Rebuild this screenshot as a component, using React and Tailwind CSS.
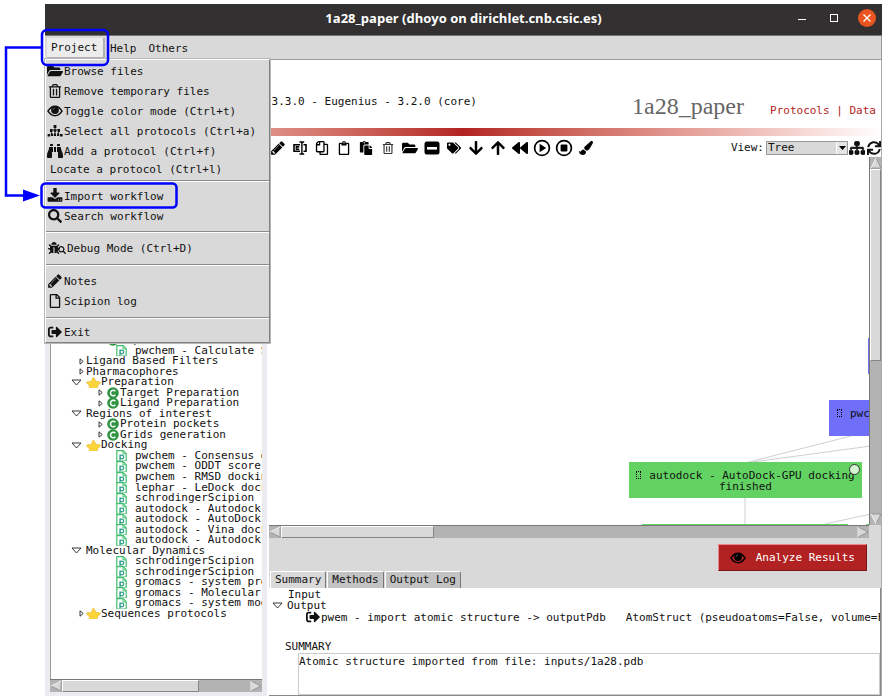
import React from "react";
import {
  FaArrowDown, FaArrowUp, FaBackward, FaBinoculars, FaBug, FaFolderOpen, FaPaste, FaPaintBrush,
  FaRegClipboard, FaRegCopy, FaRegFile, FaRegTrashAlt, FaSearch, FaSignOutAlt, FaSitemap, FaStar,
  FaSync, FaTags,
} from "react-icons/fa";

const MONO = "font-['DejaVu_Sans_Mono','Liberation_Mono',monospace]";

function Glyph({ d, className }) {
  return (
    <svg viewBox="0 0 1792 1792" className={className} fill="currentColor" aria-hidden="true">
      <path d={d} />
    </svg>
  );
}

const PENCIL = "M491 1536l91-91-235-235-91 91v107h128v128h107zm523-928q0-22-22-22-10 0-17 7l-542 542q-7 7-7 17 0 22 22 22 10 0 17-7l542-542q7-7 7-17zm-54-192l416 416-832 832h-416v-416zm683 96q0 53-37 90l-166 166-416-416 166-165q36-38 90-38 53 0 91 38l235 234q37 39 37 91z";
const DOWNLOAD = "M1344 1344q0-26-19-45t-45-19-45 19-19 45 19 45 45 19 45-19 19-45zm256 0q0-26-19-45t-45-19-45 19-19 45 19 45 45 19 45-19 19-45zm128-224v320q0 40-28 68t-68 28h-1472q-40 0-68-28t-28-68v-320q0-40 28-68t68-28h465l135 136q58 56 136 56t136-56l136-136h464q40 0 68 28t28 68zm-325-569q17 41-14 70l-448 448q-18 19-45 19t-45-19l-448-448q-31-29-14-70 17-39 59-39h256v-448q0-26 19-45t45-19h256q26 0 45 19t19 45v448h256q42 0 59 39z";

const EyeIcon = ({ className }) => (
  <svg viewBox="0 0 16 12" className={className} aria-hidden="true">
    <path d="M1 6.2C3 2.8 5.5 1.3 8 1.3s5 1.5 7 4.9c-2 3-4.5 4.5-7 4.5S3 9.2 1 6.2z" fill="none" stroke="currentColor" strokeWidth="1.5" />
    <circle cx="8" cy="5" r="3.9" fill="currentColor" />
    <path d="M6.2 4.8c0-1 .8-1.8 1.8-1.8" fill="none" stroke="#999" strokeWidth=".6" />
  </svg>
);

const RenameIcon = () => (
  <svg viewBox="0 0 14 14" className="size-3.5" fill="none" stroke="currentColor" aria-hidden="true">
    <path d="M7 3.8H1v6.4h6M10.5 3.8h2.5v6.4h-2.5" strokeWidth="1.6" />
    <path d="M6.5 1h1.8l.7.7.7-.7h1.5M6.5 13h1.8l.7-.7.7.7h1.5M8.9 1.5v11" strokeWidth="1.4" />
    <path d="M6.2 5.6H3.2v2.9h3M3.2 7h3" strokeWidth="1.1" />
  </svg>
);

const CollapseIcon = () => (
  <svg viewBox="0 0 16 14" className="h-3.5 w-4" aria-hidden="true">
    <rect x=".5" y=".5" width="15" height="13" rx="2.5" fill="currentColor" />
    <rect x="3" y="6" width="10" height="2.6" fill="#fff" />
  </svg>
);

const CircleIcon = ({ stop }) => (
  <svg viewBox="0 0 18 18" className="size-[18px]" fill="currentColor" aria-hidden="true">
    <circle cx="9" cy="9" r="7.4" fill="none" stroke="currentColor" strokeWidth="1.7" />
    {stop ? <rect x="5.6" y="5.6" width="6.8" height="6.8" rx="1" /> : <path d="M6.6 4.8v8.4L13.2 9z" />}
  </svg>
);

const BranchIcon = () => (
  <svg viewBox="0 0 16 14" className="h-3.5 w-4" fill="currentColor" aria-hidden="true">
    <path d="M6.6 1h2.8v3H6.6zM3 5h2.4v3H3zM6.8 5.4h2.4v2.4H6.8zM10.6 5H13v3h-2.4zM.6 10h2.6v2.6H.6zM4 9.6h2.2V12H4zM7 9.6h2V12H7zM10 9.6h2.2V12H10zM13 10h2.6v2.6H13z" />
    <path d="M4 6h8M8 3v8M4.4 7.5v3M11.4 7.5v3" stroke="currentColor" strokeWidth=".9" />
  </svg>
);

const BugSearchIcon = () => (
  <span className="flex items-end">
    <FaBug className="size-3" />
    <FaSearch className="-ml-0.5 size-2" />
  </span>
);

const MENU = [
  {
    pad: "pb-[3px]",
    items: [
      { h: "h-5", icon: <FaFolderOpen className="size-4" />, label: "Browse files" },
      { h: "h-5", icon: <FaRegTrashAlt className="size-3.5" />, label: "Remove temporary files" },
      { h: "h-5", icon: <EyeIcon className="h-3 w-4" />, label: "Toggle color mode (Ctrl+t)" },
      { h: "h-5", icon: <BranchIcon />, label: "Select all protocols (Ctrl+a)" },
      { h: "h-5", icon: <FaBinoculars className="size-4" />, label: "Add a protocol (Ctrl+f)" },
      { h: "h-4", label: "Locate a protocol (Ctrl+l)" },
    ],
  },
  {
    pad: "py-[5px]",
    items: [
      { h: "h-5", icon: <Glyph d={DOWNLOAD} className="size-4" />, label: "Import workflow" },
      { h: "h-5", icon: <FaSearch className="size-3.5" />, label: "Search workflow" },
    ],
  },
  { pad: "py-1.5", items: [{ h: "h-5", wide: true, icon: <BugSearchIcon />, label: "Debug Mode (Ctrl+D)" }] },
  {
    pad: "py-1.5",
    items: [
      { h: "h-5", icon: <Glyph d={PENCIL} className="size-4" />, label: "Notes" },
      { h: "h-5", icon: <FaRegFile className="h-3.5 w-3" />, label: "Scipion log" },
    ],
  },
  { pad: "pt-1", items: [{ h: "h-5", icon: <FaSignOutAlt className="size-3.5" />, label: "Exit" }] },
];

function ProjectMenu() {
  return (
    <div role="menu" className="absolute top-full left-0 z-10 w-[225px] border border-t-white border-l-white border-r-[#808080] border-b-[#808080] bg-[#d9d9d9] pt-px shadow-[0_0_0_1px_#b8b8b8]">
      {MENU.map((group, g) => (
        <div key={g} className={`${group.pad} ${g ? "border-t border-[#8c8c8c] shadow-[inset_0_1px_0_#fff]" : ""}`}>
          {group.items.map((item) => (
            <button key={item.label} role="menuitem" className={`flex w-full items-center whitespace-nowrap ${item.h}`}>
              {item.icon ? (
                <span className={item.wide ? "flex w-[21px] justify-center" : "flex w-[18px] justify-center"}>{item.icon}</span>
              ) : (
                <span className="w-1" />
              )}
              {item.label}
            </button>
          ))}
        </div>
      ))}
    </div>
  );
}

const TOOLS = [
  ["Edit", <Glyph d={PENCIL} className="size-4" />],
  ["Rename", <RenameIcon />],
  ["Copy", <FaRegCopy className="h-3.5 w-4 -scale-x-100" />],
  ["Duplicate", <FaRegClipboard className="size-3.5" />],
  ["Paste", <FaPaste className="size-3.5" />],
  ["Delete", <FaRegTrashAlt className="size-3 text-[#333]" />],
  ["Browse", <FaFolderOpen className="size-4" />],
  ["Collapse", <CollapseIcon />],
  ["Labels", <FaTags className="size-3.5" />],
  ["Select to", <FaArrowDown className="size-4" />],
  ["Select from", <FaArrowUp className="size-4" />],
  ["Restart", <FaBackward className="size-4" />],
  ["Continue", <CircleIcon />],
  ["Stop", <CircleIcon stop />],
  ["Reset", <FaPaintBrush className="size-3.5" />],
];

const TREE = [
  ["branch", "Export"],
  ["leaf", "pwchem - Calculate SASA"],
  ["group", "Ligand Based Filters"],
  ["group", "Pharmacophores"],
  ["open", "Preparation", true],
  ["branch", "Target Preparation"],
  ["branch", "Ligand Preparation"],
  ["open", "Regions of interest"],
  ["branch", "Protein pockets"],
  ["branch", "Grids generation"],
  ["open", "Docking", true],
  ["leaf", "pwchem - Consensus docking"],
  ["leaf", "pwchem - ODDT score docking"],
  ["leaf", "pwchem - RMSD docking"],
  ["leaf", "lephar - LeDock docking"],
  ["leaf", "schrodingerScipion"],
  ["leaf", "autodock - Autodock"],
  ["leaf", "autodock - AutoDock"],
  ["leaf", "autodock - Vina docking"],
  ["leaf", "autodock - Autodock"],
  ["open", "Molecular Dynamics"],
  ["leaf", "schrodingerScipion"],
  ["leaf", "schrodingerScipion"],
  ["leaf", "gromacs - system prep"],
  ["leaf", "gromacs - Molecular"],
  ["leaf", "gromacs - system modification"],
  ["group", "Sequences protocols", true],
];

const ClosedArrow = () => (
  <svg viewBox="0 0 5 7" className="h-[7px] w-[5px] shrink-0" aria-hidden="true">
    <path d="M1 .8v5.4L4.2 3.5z" fill="#fff" stroke="#222" strokeWidth=".9" />
  </svg>
);
const OpenArrow = () => (
  <svg viewBox="0 0 11 7" className="h-[7px] w-[11px] shrink-0" aria-hidden="true">
    <path d="M1 1h9L5.5 6z" fill="#fff" stroke="#222" strokeWidth=".9" />
  </svg>
);
const DocIcon = () => (
  <svg viewBox="0 0 11 11" className="size-[11px]" aria-hidden="true">
    <path d="M.8 .7h6.4l3 3v7.3H.8z" fill="#fff" stroke="#3fbf6b" strokeWidth="1.2" />
    <path d="M7 .7v3.2h3.2" fill="none" stroke="#3fbf6b" />
    <path d="M4 10.5V4.6M4 7q0-1.900 1.800-1.900T7.600 7 5.800 8.800 4 7" fill="none" stroke="#2f9e8c" strokeWidth="1.3" />
  </svg>
);
const ClassIcon = () => (
  <svg viewBox="0 0 12 12" className="size-3" aria-hidden="true">
    <circle cx="6" cy="6" r="5.8" fill="#2f9442" />
    <path d="M8.300 4.300A2.700 2.700 0 1 0 8.300 7.700" fill="none" stroke="#fff" strokeWidth="1.5" />
  </svg>
);

function TreeRow({ kind, label, star }) {
  const indent = { group: "pl-7", open: "pl-5", branch: "pl-[47px]", leaf: "pl-[65px]" }[kind];
  const gap = { group: "gap-0.5", open: "gap-1", branch: "gap-1", leaf: "gap-2" }[kind];
  return (
    <li className={`flex min-h-0 items-center leading-[10px] whitespace-nowrap ${indent} ${gap}`}>
      {kind === "open" && <OpenArrow />}
      {(kind === "group" || kind === "branch") && <ClosedArrow />}
      {kind === "leaf" && <span className="flex shrink-0"><DocIcon /></span>}
      <span className="flex items-center">
        {kind === "branch" && <span className="mr-px flex shrink-0"><ClassIcon /></span>}
        {star && (
          <span className={`flex h-[11px] shrink-0 items-start ${kind === "open" ? "overflow-hidden" : ""}`}>
            <FaStar className="h-3.5 w-[15px] shrink-0 fill-[#fbd43c] stroke-[#d9a520] stroke-[16]" />
          </span>
        )}
        {label}
      </span>
    </li>
  );
}

function Arrow({ dir }) {
  const d = { left: "M1 6L11 1v10z", right: "M11 6L1 1v10z", up: "M6 1L1 11h10z", down: "M6 11L1 1h10z" }[dir];
  return (
    <svg viewBox="0 0 12 12" className="size-3 shrink-0" aria-hidden="true">
      <path d={d} fill="#d9d9d9" stroke="#8a8a8a" strokeWidth=".8" />
      <path d={dir === "down" ? "M6 11L1 1" : dir === "right" ? "M1 11V1" : dir === "up" ? "M6 1L1 11" : "M1 6L11 1"} stroke="#fff" />
    </svg>
  );
}

const THUMB = "border border-t-white border-l-white border-r-[#858585] border-b-[#858585] bg-[#d9d9d9]";

function HScroll({ thumb, className = "" }) {
  return (
    <div className={`flex h-[13px] items-stretch border-t border-[#777] bg-[#b3b3b3] ${className}`}>
      <Arrow dir="left" />
      <div className={`${THUMB} ${thumb}`} />
      <div className="flex-1" />
      <Arrow dir="right" />
    </div>
  );
}

const NodeBox = () => <span className="mr-2 inline-block h-2 w-[5px] border border-dotted border-black" />;

function Canvas() {
  return (
    <div className="relative min-w-0 flex-1 overflow-hidden bg-white">
      <svg className="absolute inset-0 size-full" stroke="#cfcfcf" fill="none" aria-hidden="true">
        <path d="M476 306L582 279M476 306L602 289M476 341V368M556 367L602 357" />
      </svg>
      <div className="absolute top-[181px] left-[599px] h-9 w-[233px] bg-[#6f6ffa]" />
      <div className="absolute top-[243px] left-[560px] h-9 w-[233px] bg-[#6f6ffa] pt-2 pl-2 leading-[11px] whitespace-nowrap">
        <NodeBox />pwchem
      </div>
      <div className="absolute top-[305px] left-[360px] h-9 w-[233px] bg-[#62d362] pt-2 text-center leading-[11px] whitespace-nowrap">
        <NodeBox />autodock - AutoDock-GPU docking
        <br />
        finished
        <span className="absolute top-0.5 right-0.5 size-[11px] rounded-full border border-[#333] bg-[#d5f5d0]" />
      </div>
      <div className="absolute top-[367px] left-[373px] h-9 w-[206px] bg-[#62d362]" />
      <div className="absolute top-[367px] left-[597px] h-9 w-[206px] bg-[#62d362]" />
    </div>
  );
}

function Tab({ children, active }) {
  return (
    <button
      role="tab"
      aria-selected={!!active}
      className={`mr-px h-[17px] rounded-tr-xs border-x border-t border-t-white border-r-[#777] border-l-white px-1 leading-4 ${active ? "bg-[#d9d9d9]" : "bg-[#c3c3c3]"}`}
    >
      {children}
    </button>
  );
}

function Annotations() {
  return (
    <svg className="pointer-events-none absolute top-0 left-0 z-20 h-[220px] w-[190px]" fill="none" stroke="#0000ff" aria-hidden="true">
      <rect x="42" y="30" width="66" height="35" rx="5" strokeWidth="2.5" />
      <rect x="41.5" y="183.5" width="135" height="24" rx="4" strokeWidth="2.5" />
      <path d="M41 47.5H6V195.5H26" strokeWidth="2.5" />
      <path d="M23 189.5L40 195.5L23 201.5z" fill="#0000ff" stroke="none" />
    </svg>
  );
}

export default function App() {
  return (
    <div className={`relative flex min-h-screen flex-col overflow-hidden bg-white pt-1 pr-0.5 pb-[3px] pl-[45px] text-[11px] leading-[11px] text-[#111] ${MONO}`}>
      <Annotations />
      <header className="grid h-8 shrink-0 grid-cols-[1fr_auto_1fr] items-center border-b border-[#777] bg-[#323031] text-white">
        <span />
        <h1 className="pb-1 font-['Open_Sans','Noto_Sans',sans-serif] text-[13px] leading-6 font-bold">1a28_paper (dhoyo on dirichlet.cnb.csic.es)</h1>
        <div className="flex items-center justify-end pr-1.5 pb-1">
          <button aria-label="Minimize" className="mt-1 mr-6 h-px w-2 bg-white" />
          <button aria-label="Maximize" className="mr-5 size-2 border border-white" />
          <button aria-label="Close" className="flex size-[18px] items-center justify-center rounded-full bg-[#e95420]">
            <svg viewBox="0 0 8 8" className="size-2" stroke="#fff" strokeWidth="1.3"><path d="M.5 .5l7 7M7.5 .5l-7 7" /></svg>
          </button>
        </div>
      </header>

      <nav className="relative flex h-6 shrink-0 border-r border-b border-[#999] bg-[#d9d9d9]">
        <button className="mt-0.5 ml-0.5 w-[58px] border-r-2 border-b-2 border-[#b0b0b0] bg-[#ececec] pl-1 text-left">Project</button>
        <button className="ml-1 px-px pt-px">Help</button>
        <button className="ml-2.5 px-px pt-px">Others</button>
        <ProjectMenu />
      </nav>

      <main className="flex flex-1 flex-col border-r border-[#aaa]">
        <div className="flex h-[68px] shrink-0 items-end pr-[5px]">
          <p className="mb-[21px] pl-[220px]">v3.3.0 - Eugenius - 3.2.0 (core)</p>
          <div className="ml-auto flex items-baseline pb-2.5">
            <h2 className="mr-[26px] font-['Liberation_Serif',serif] text-2xl leading-6 text-[#666]">1a28_paper</h2>
            <p className="text-[#b22222]">
              <a href="#protocols">Protocols</a> | <a href="#data">Data</a>
            </p>
          </div>
        </div>
        <div className="h-2 shrink-0 bg-linear-to-r from-white via-[#b22222] to-white" />

        <div className="flex h-[21px] shrink-0 items-center pt-0.5 pl-[222px]">
          {TOOLS.map(([name, icon]) => (
            <button key={name} aria-label={name} className="flex w-[22px] justify-center text-black">{icon}</button>
          ))}
          <label htmlFor="view" className="mr-0.5 ml-auto">View:</label>
          <div className="relative flex h-[14px] w-[82px] border border-[#999] bg-[#d9d9d9]">
            <select id="view" className="w-full appearance-none pl-px leading-3 outline-none" defaultValue="Tree">
              <option>Tree</option>
              <option>List</option>
            </select>
            <span className="pointer-events-none absolute inset-y-0 right-0 flex w-[11px] items-center justify-center border-l border-white bg-[#e4e4e4]">
              <svg viewBox="0 0 7 4" className="h-1 w-[7px]"><path d="M0 0h7L3.5 4z" /></svg>
            </span>
          </div>
          <button aria-label="Organize" className="ml-px"><FaSitemap className="size-4 stroke-black stroke-[30]" /></button>
          <button aria-label="Refresh"><FaSync className="ml-0.5 size-3.5" /></button>
        </div>

        <div className="flex min-h-0 flex-1">
          <aside className="flex w-[222px] shrink-0 flex-col border-x-[5px] border-b-4 border-[#ebecef] bg-white pt-[178px]">
            <ul className="grid h-[284px] auto-rows-fr overflow-hidden border-l border-[#999]">
              {TREE.map(([kind, label, star], i) => (
                <TreeRow key={i} kind={kind} label={label} star={star} />
              ))}
            </ul>
            <div className="flex-1 border-l border-[#999]" />
            <HScroll thumb="w-[137px]" />
          </aside>

          <section className="ml-0.5 flex min-w-0 flex-1 flex-col">
            <div className="flex min-h-0 flex-1">
              <Canvas />
              <div className="flex w-3 flex-col border-l border-[#777] bg-[#b3b3b3]">
                <Arrow dir="up" />
                <div className={`h-[192px] ${THUMB}`} />
                <div className="flex-1" />
                <Arrow dir="down" />
              </div>
            </div>
            <div className="flex bg-[#d9d9d9]">
              <HScroll thumb="w-[153px]" className="flex-1" />
              <div className="w-3" />
            </div>
            <div className="flex h-[33px] items-start justify-end bg-[#d9d9d9] pt-1.5 pr-3.5">
              <button className="flex h-[27px] items-center gap-2.5 border border-t-[#e88] border-l-[#e88] border-r-[#7a1515] border-b-[#7a1515] bg-[#b22222] px-[11px] text-white">
                <EyeIcon className="h-3 w-4 text-black" />
                Analyze Results
              </button>
            </div>
            <div role="tablist" className="flex h-[17px] bg-[#d9d9d9] pl-px">
              <Tab active>Summary</Tab>
              <Tab>Methods</Tab>
              <Tab>Output Log</Tab>
            </div>
            <div className="flex h-[108px] flex-col border-r border-b border-[#888] pt-0.5">
              <p className="pl-[19px] leading-[10px]">Input</p>
              <p className="flex items-center gap-1 pl-[3px] leading-[11px]"><OpenArrow />Output</p>
              <p className="flex h-3 items-center overflow-hidden pl-[37px] whitespace-nowrap">
                <FaSignOutAlt className="mr-px size-3.5 shrink-0" />
                <span className="mr-5">pwem - import atomic structure -&gt; outputPdb</span>
                <span>AtomStruct (pseudoatoms=False, volume=False)</span>
              </p>
              <label htmlFor="summary" className="mt-[18px] pl-4">SUMMARY</label>
              <textarea
                id="summary"
                readOnly
                className="mt-px ml-[29px] block flex-1 resize-none overflow-hidden border border-[#ccc] pt-0.5 leading-[11px] outline-none"
                defaultValue="Atomic structure imported from file: inputs/1a28.pdb"
              />
            </div>
          </section>
        </div>
      </main>
    </div>
  );
}
